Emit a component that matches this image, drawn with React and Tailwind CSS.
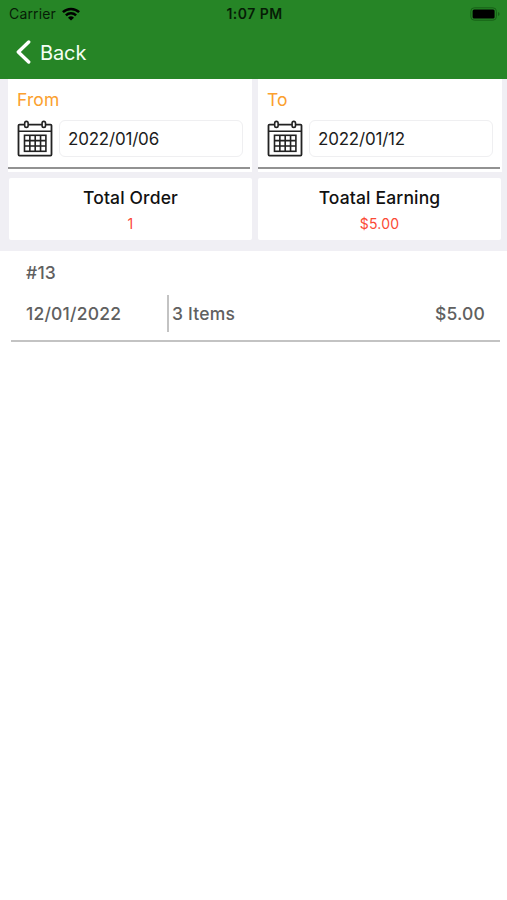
function StatusBar() {
  return (
    <div className="flex h-[27px] items-center justify-between pl-[9px] pr-[7px] text-[#061d06]">
      <div className="flex flex-1 items-center gap-[6px]">
        <span className="text-[14px] leading-none tracking-[0.15px]">Carrier</span>
        <svg width="18" height="14" viewBox="0 0 18 14" fill="none" stroke="#000" strokeWidth="2.5">
          <path d="M0.9 5.2a11.6 11.6 0 0 1 16.2 0" />
          <path d="M3.9 8.4a7.3 7.3 0 0 1 10.2 0" />
          <path d="M9 13.6L6 10.7a4.3 4.3 0 0 1 6 0z" fill="#000" stroke="none" />
        </svg>
      </div>
      <span className="pt-px text-[14px] font-semibold leading-none tracking-[0.45px]">1:07 PM</span>
      <div className="flex flex-1 justify-end">
        <svg width="30" height="14" viewBox="0 0 30 14">
          <rect x="0.8" y="0.8" width="25.6" height="12.4" rx="3.5" fill="none" stroke="#176017" strokeWidth="1" />
          <rect x="2.6" y="2.6" width="22" height="9" rx="1.5" fill="#000" />
          <path d="M28 5v4q1.6-.6 1.6-2T28 5z" fill="#176017" />
        </svg>
      </div>
    </div>
  );
}

function CalendarIcon() {
  return (
    <svg width="36" height="37" viewBox="0 0 36 37" fill="none" stroke="#222" strokeWidth="1.8" className="shrink-0">
      <rect x="1.5" y="4.6" width="33" height="31" rx="1" />
      <path d="M1.5 11.3h33" strokeWidth="1.5" />
      <rect x="7.7" y="1.4" width="3.4" height="6" rx="1.7" fill="#fff" strokeWidth="1.6" />
      <rect x="25.1" y="1.4" width="3.4" height="6" rx="1.7" fill="#fff" strokeWidth="1.6" />
      <rect x="7.5" y="15.3" width="21.4" height="16" strokeWidth="1.6" />
      <path d="M12.85 15.3v16M18.2 15.3v16M23.55 15.3v16M7.5 20.6h21.4M7.5 26h21.4" strokeWidth="1.6" />
    </svg>
  );
}

function DateField({ label, value }) {
  return (
    <div className="h-[93px] w-[244px] bg-white">
      <div className="mr-[2px] h-[90px] border-b-2 border-[#929292] pl-[9px] pt-[10px]">
        <p className="text-[17.5px] leading-[22px] tracking-[0.1px] text-[#fba02e]">{label}</p>
        <div className="mt-[9px] flex items-center gap-[6px]">
          <CalendarIcon />
          <div className="flex h-[37px] w-[184px] items-center rounded-[6px] border border-[#efeff1] pl-2 pt-[2px] text-[17px] tracking-[-0.2px] text-[#1c1c1c]">
            {value}
          </div>
        </div>
      </div>
    </div>
  );
}

function TotalCard({ title, value }) {
  return (
    <div className="h-[62px] w-[243px] rounded-[2px] bg-white pt-[8px] text-center">
      <p className="text-[17.5px] font-medium leading-[23px] tracking-[0.15px] text-[#111]">{title}</p>
      <p className="mt-[7px] text-[14px] leading-[16px] tracking-[0.2px] text-[#fb4a35]">{value}</p>
    </div>
  );
}

function OrderRow({ order }) {
  return (
    <div className="ml-[11px] mr-[7px] h-[91px] border-b-2 border-[#c3c3c3] pl-[15px] pr-[15px] pt-[11px] text-[17.5px] font-medium leading-[22px] tracking-[0.2px] text-[#606060]">
      <p>{order.number}</p>
      <div className="mt-[11px] flex h-[37px] items-center">
        <p className="w-[141px]">{order.date}</p>
        <div className="h-full w-[2px] bg-[#c3c3c3]" />
        <p className="ml-[3px]">{order.items}</p>
        <p className="ml-auto">{order.price}</p>
      </div>
    </div>
  );
}

const orders = [{ number: '#13', date: '12/01/2022', items: '3 Items', price: '$5.00' }];

export default function App() {
  return (
    <div className="h-[900px] w-[507px] overflow-hidden bg-white font-['Inter','Liberation_Sans',sans-serif]">
      <header className="h-[79px] bg-[#268526]">
        <StatusBar />
        <button className="flex h-[50px] items-center pl-[16px] text-[20px] tracking-[-0.1px] text-[#f4fff4]">
          <svg width="15" height="24" viewBox="0 0 15 24" fill="none" stroke="#fff" strokeWidth="3.4" strokeLinecap="round" strokeLinejoin="round">
            <path d="M12.7 2L2.3 12l10.4 10" />
          </svg>
          <span className="ml-[9px] pt-px">Back</span>
        </button>
      </header>
      <section className="h-[172px] bg-[#f0eff4] pl-[8px]">
        <div className="flex gap-[6px]">
          <DateField label="From" value="2022/01/06" />
          <DateField label="To" value="2022/01/12" />
        </div>
        <div className="ml-[1px] mt-[6px] flex gap-[6px]">
          <TotalCard title="Total Order" value="1" />
          <TotalCard title="Toatal Earning" value="$5.00" />
        </div>
      </section>
      {orders.map((order) => (
        <OrderRow key={order.number} order={order} />
      ))}
    </div>
  );
}
